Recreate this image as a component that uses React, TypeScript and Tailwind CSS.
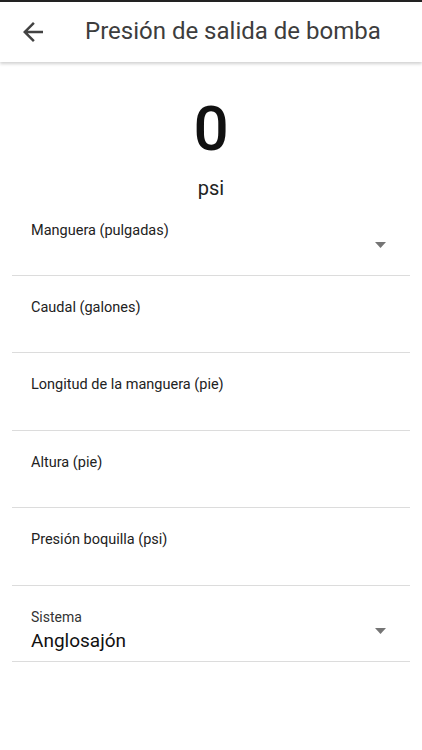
import React from "react";

const Arrow = () => (
  <svg width="11" height="6" viewBox="0 0 11 6" className="block">
    <path d="M0 0 L11 0 L5.5 6 Z" fill="#757575" />
  </svg>
);

const fields = [
  { label: "Caudal (galones)", cls: "pt-[22px] pb-[34px]" },
  { label: "Longitud de la manguera (pie)", cls: "pt-[22px] pb-[35px]" },
  { label: "Altura (pie)", cls: "pt-[22px] pb-[34px]" },
  { label: "Presión boquilla (psi)", cls: "pt-[22px] pb-[35px]" },
];

export default function App() {
  return (
    <div
      className="w-[422px] h-[750px] bg-white overflow-hidden"
      style={{ fontFamily: "Roboto, 'Noto Sans', sans-serif" }}
    >
      <div className="h-[62px] border-t-2 border-[#222] bg-white flex items-center shadow-[0_2px_3px_rgba(0,0,0,0.18)] relative z-10">
        <div className="w-[85px] flex items-center pl-[18px]">
          <svg width="30" height="30" viewBox="0 0 24 24">
            <path
              d="M20 11H7.83l5.59-5.59L12 4l-8 8 8 8 1.41-1.41L7.83 13H20v-2z"
              fill="#424242"
            />
          </svg>
        </div>
        <div className="text-[24px] leading-[30px] text-[#3d3d3d] pb-[2px]">
          Presión de salida de bomba
        </div>
      </div>

      <div className="flex flex-col items-center">
        <div className="mt-[32px] text-[62px] leading-[70px] font-medium text-[#111]">0</div>
        <div className="mt-[10px] text-[20px] leading-[28px] text-[#222]">psi</div>
      </div>

      <div className="px-[12px]">
        <div className="mt-[19px] border-b border-[#dcdcdc] pl-[19px] pr-[24px] pb-[27px]">
          <div className="text-[14.5px] leading-[20px] text-[#222]">Manguera (pulgadas)</div>
          <div className="flex justify-end mt-[1px]">
            <Arrow />
          </div>
        </div>

        {fields.map((f) => (
          <div key={f.label} className={"border-b border-[#dcdcdc] pl-[19px] " + f.cls}>
            <div className="text-[14.5px] leading-[20px] text-[#222]">{f.label}</div>
          </div>
        ))}

        <div className="border-b border-[#dcdcdc] pl-[19px] pr-[24px] pt-[22px] pb-[8px] flex items-center justify-between">
          <div className="flex flex-col">
            <div className="text-[14px] leading-[18px] text-[#333]">Sistema</div>
            <div className="mt-[3px] text-[19px] leading-[24px] text-[#111]">Anglosajón</div>
          </div>
          <Arrow />
        </div>
      </div>
    </div>
  );
}
